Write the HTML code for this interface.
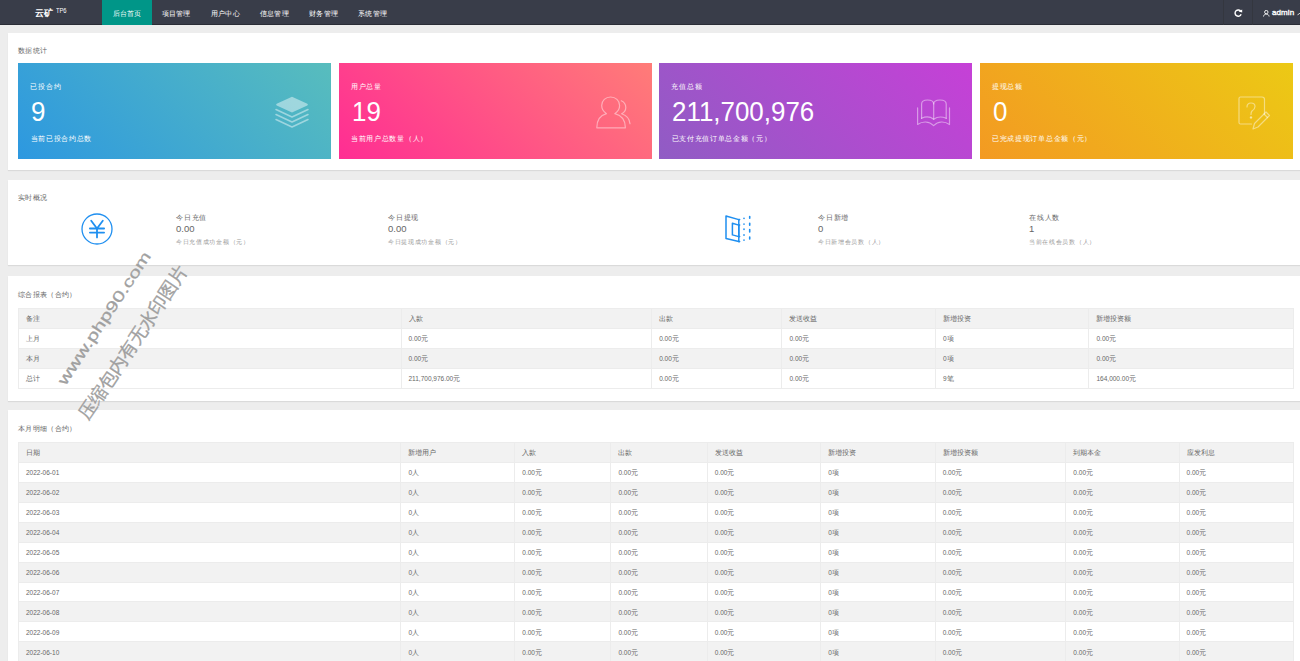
<!DOCTYPE html>
<html><head><meta charset="utf-8"><style>
*{margin:0;padding:0;box-sizing:border-box}
html,body{width:1300px;height:661px;overflow:hidden;background:#ededed;font-family:"Liberation Sans",sans-serif;}
.a{position:absolute;white-space:nowrap;line-height:1}
#nav{position:absolute;left:0;top:0;width:1300px;height:25px;background:#393d49;border-bottom:1px solid #2a2d36}
#nav .it{position:absolute;top:0;height:25px;line-height:27.6px;font-size:7.3px;letter-spacing:0.25px;text-indent:0.25px;color:#fff;text-align:center}
#nav .on{background:#009688}
.panel{position:absolute;left:8px;width:1300px;background:#fff;box-shadow:0 1px 1px rgba(0,0,0,.08)}
.ptitle{position:absolute;left:10px;font-size:7.3px;letter-spacing:0.35px;color:#666;line-height:1}
.card{position:absolute;top:30px;height:96px;color:#fff}
.card .l1{position:absolute;left:12.3px;top:20.5px;font-size:7.1px;letter-spacing:0.75px;line-height:1}
.card .num{position:absolute;left:13px;top:35.5px;font-size:27px;transform:scaleX(0.96);transform-origin:0 0;line-height:1}
.card .l2{position:absolute;left:12.5px;top:71.7px;font-size:7.3px;letter-spacing:0.7px;line-height:1}
.card svg{position:absolute}
table{position:absolute;border-collapse:collapse;table-layout:fixed;font-size:6.5px;color:#666}
td,th{height:19.93px;padding:2px 0 0 7px;text-align:left;font-weight:normal;border:1px solid #ececec;white-space:nowrap;line-height:1}
tr:nth-child(even) td{background:#f2f2f2}
thead th{background:#f2f2f2}
.st .t{font-size:7.2px;letter-spacing:0.8px;color:#666}
.st .v{font-size:9.5px;color:#666}
.st .d{font-size:6.2px;letter-spacing:0.7px;color:#999}
.wm{position:absolute;color:rgba(120,120,120,.55);transform-origin:0 0;white-space:nowrap;line-height:1}
</style></head><body>
<div id="nav"><div class="a" style="left:35px;top:8.7px;font-size:9px;color:#fff;font-weight:bold">云矿</div><div class="a" style="left:55.6px;top:6.6px;font-size:7.4px;color:#fff;transform:scaleX(0.78);transform-origin:0 0">TP6</div><div class="it on" style="left:102.0px;width:50px">后台首页</div><div class="it" style="left:151.1px;width:50px">项目管理</div><div class="it" style="left:200.2px;width:50px">用户中心</div><div class="it" style="left:249.3px;width:50px">信息管理</div><div class="it" style="left:298.4px;width:50px">财务管理</div><div class="it" style="left:347.5px;width:50px">系统管理</div><div style="position:absolute;left:1223px;top:0;width:1px;height:25px;background:#34373f"></div><div style="position:absolute;left:1252px;top:0;width:1px;height:25px;background:#34373f"></div><svg style="position:absolute;left:1233.5px;top:8.8px" width="9" height="8" viewBox="0 0 9 8"><path d="M6.9 2.6A3.1 3.1 0 1 0 7.1 5.2" fill="none" stroke="#fff" stroke-width="1.4"/><path d="M4.6 2.4L8.2 0.4L8.2 3.6Z" fill="#fff"/></svg><svg style="position:absolute;left:1263px;top:10px" width="7" height="7" viewBox="0 0 7 7"><circle cx="3.3" cy="2.1" r="1.7" fill="none" stroke="#fff" stroke-width="0.9"/><path d="M0.5 6.5C0.8 4.8 1.9 4.1 3.3 4.1S5.8 4.8 6.1 6.5" fill="none" stroke="#fff" stroke-width="0.9"/></svg><div class="a" style="left:1272px;top:9.2px;font-size:8px;letter-spacing:0.1px;color:#fff;-webkit-text-stroke:0.35px #fff">admin</div><svg style="position:absolute;left:1297px;top:11.5px" width="5" height="4" viewBox="0 0 5 4"><path d="M0.5 3.2L2.5 1.2L4.5 3.2" fill="none" stroke="#fff" stroke-width="0.9"/></svg></div>
<div class="panel" style="top:33px;height:137px"><div class="ptitle" style="top:13.5px">数据统计</div><div class="card" style="left:10px;width:313px;background:linear-gradient(45deg,#2d98e0,#58bdbd)"><div class="l1">已投合约</div><div class="num">9</div><div class="l2">当前已投合约总数</div><svg style="left:257px;top:33px" width="34" height="32" viewBox="0 0 34 32"><g fill="none" stroke="rgba(255,255,255,.45)" stroke-width="1.6" stroke-linecap="round" stroke-linejoin="round"><path d="M1 13.5L17 21L33 13.5"/><path d="M1 18.5L17 26L33 18.5"/><path d="M1 23.5L17 31L33 23.5"/></g><path d="M17 0.8L32.3 7.8Q33.6 8.6 32.3 9.4L17 16.6L1.7 9.4Q0.4 8.6 1.7 7.8Z" fill="rgba(255,255,255,.45)"/></svg></div><div class="card" style="left:330.5px;width:313px;background:linear-gradient(45deg,#ff2d93,#ff7c78)"><div class="l1">用户总量</div><div class="num">19</div><div class="l2">当前用户总数量（人）</div><svg style="left:257px;top:33px" width="36" height="33" viewBox="0 0 36 33"><g fill="none" stroke="rgba(255,255,255,.45)" stroke-width="1.2" stroke-linecap="round" stroke-linejoin="round"><path d="M10.5 17.7C7.5 15.8 5.7 12.8 5.7 9.6C5.7 4.6 9.6 1 14.6 1S23.6 4.6 23.6 9.6C23.6 12.8 21.8 15.8 18.8 17.7C25 19.3 29.4 24 29.4 31.8H0.8C0.8 24 4.5 19.3 10.5 17.7Z"/><path d="M25.3 4.8C28 6 29.8 8.6 29.8 11.5C29.8 14.2 28.2 16.5 25.6 17.7C30.5 19.3 33.6 23 34 27.7"/></g></svg></div><div class="card" style="left:651px;width:313px;background:linear-gradient(45deg,#905cc4,#c640d7)"><div class="l1">充值总额</div><div class="num">211,700,976</div><div class="l2">已支付充值订单总金额（元）</div><svg style="left:258px;top:36px" width="34" height="28" viewBox="0 0 34 28"><g fill="none" stroke="rgba(255,255,255,.45)" stroke-width="1.2" stroke-linecap="round" stroke-linejoin="round"><path d="M4.6 19.3V5C4.6 2.5 6.5 1 10.5 1C14.5 1 16.7 2.5 16.7 5V20.2"/><path d="M16.7 5C16.7 2.5 19 1 23 1C27 1 29.2 2.5 29.2 5V19.3"/><path d="M4.6 19.3C8.5 17.5 13.5 17.8 16.7 20.3C20 17.8 25 17.5 29.2 19.3"/><path d="M0.6 8.9V25.5C5.5 22 12 22 16.6 26.6C21.2 22 27.5 22 32.5 25.5V8.9"/></g></svg></div><div class="card" style="left:971.5px;width:313px;background:linear-gradient(45deg,#f39a22,#ecc915)"><div class="l1">提现总额</div><div class="num">0</div><div class="l2">已完成提现订单总金额（元）</div><svg style="left:258px;top:32.5px" width="34" height="34" viewBox="0 0 34 34"><g fill="none" stroke="rgba(255,255,255,.45)" stroke-width="1.2" stroke-linecap="round" stroke-linejoin="round"><path d="M13.5 28H2.5Q1 28 1 26.5V2.5Q1 1 2.5 1H24Q26.5 1 26.5 3.5V18"/><path d="M9 11Q9 7 13 7Q17 7 17 10.5Q17 13 14 15Q13 16 13 18.5"/><circle cx="13" cy="21.5" r="0.7" fill="rgba(255,255,255,.45)"/><path d="M15 33L16.5 27.5L28 16L31.5 19.5L20 31Z"/><path d="M26 18L29.5 21.5"/></g></svg></div></div>
<div class="panel" style="top:179.7px;height:85.6px"><div class="ptitle" style="top:14px">实时概况</div><svg style="position:absolute;left:72.7px;top:33.2px" width="32" height="32" viewBox="0 0 32 32"><circle cx="16" cy="16" r="15" fill="none" stroke="#1f8ff0" stroke-width="1.3"/><g fill="none" stroke="#1f8ff0" stroke-width="1.8" stroke-linecap="round"><path d="M10.2 7.8L16 15.5L21.8 7.8"/><path d="M16 15.5V24.4"/><path d="M8.9 15.5H23.1"/><path d="M8.9 19.6H23.1"/></g></svg><svg style="position:absolute;left:717px;top:35px" width="27" height="28" viewBox="0 0 27 28"><g fill="none" stroke="#1f8ff0" stroke-width="1.5" stroke-linejoin="round"><path d="M1 1L13.8 4.6V26.6L1 23.6Z"/><path d="M7.4 8.3L13.8 10.1V21.6L7.4 19.9Z"/></g><g stroke="#1f8ff0" stroke-width="1.6" stroke-linecap="round"><path d="M19 3.3v0.2M19 9v0.3M19 14.1v0.3M19 19.9v0.3M19 25.1v0.2"/><path d="M24.7 1.5v1.8M24.7 8.2v2M24.7 14.6v2.4M24.7 22v2"/><path d="M13.8 4.6h0.8M13.8 10.1h0.8M13.8 21.6h0.8M13.8 26.6h0.8"/></g></svg><div class="st"><div class="a t" style="left:168px;top:34px">今日充值</div><div class="a v" style="left:168px;top:44.2px">0.00</div><div class="a d" style="left:168px;top:59px">今日充值成功金额（元）</div></div><div class="st"><div class="a t" style="left:380px;top:34px">今日提现</div><div class="a v" style="left:380px;top:44.2px">0.00</div><div class="a d" style="left:380px;top:59px">今日提现成功金额（元）</div></div><div class="st"><div class="a t" style="left:810px;top:34px">今日新增</div><div class="a v" style="left:810px;top:44.2px">0</div><div class="a d" style="left:810px;top:59px">今日新增会员数（人）</div></div><div class="st"><div class="a t" style="left:1021px;top:34px">在线人数</div><div class="a v" style="left:1021px;top:44.2px">1</div><div class="a d" style="left:1021px;top:59px">当前在线会员数（人）</div></div></div>
<div class="panel" style="top:275.6px;height:125.7px"><div class="ptitle" style="top:15.5px">综合报表（合约）</div><table style="left:10px;top:32.7px;width:1275px"><colgroup><col style="width:382.5px"><col style="width:250.70000000000005px"><col style="width:130.29999999999995px"><col style="width:153.5px"><col style="width:153.5px"><col style="width:204.5px"></colgroup><thead><tr><th>备注</th><th>入款</th><th>出款</th><th>发送收益</th><th>新增投资</th><th>新增投资额</th></tr></thead><tbody><tr><td>上月</td><td>0.00元</td><td>0.00元</td><td>0.00元</td><td>0项</td><td>0.00元</td></tr><tr><td>本月</td><td>0.00元</td><td>0.00元</td><td>0.00元</td><td>0项</td><td>0.00元</td></tr><tr><td>总计</td><td>211,700,976.00元</td><td>0.00元</td><td>0.00元</td><td>9笔</td><td>164,000.00元</td></tr></tbody></table></div>
<div class="panel" style="top:409.7px;height:400px"><div class="ptitle" style="top:15.5px">本月明细（合约）</div><table style="left:10px;top:32.4px;width:1275px"><colgroup><col style="width:382.4px"><col style="width:113.89999999999998px"><col style="width:96.10000000000002px"><col style="width:96.39999999999998px"><col style="width:113.60000000000002px"><col style="width:114.30000000000007px"><col style="width:130.70000000000005px"><col style="width:113.19999999999982px"><col style="width:114.40000000000009px"></colgroup><thead><tr><th>日期</th><th>新增用户</th><th>入款</th><th>出款</th><th>发送收益</th><th>新增投资</th><th>新增投资额</th><th>到期本金</th><th>应发利息</th></tr></thead><tbody><tr><td>2022-06-01</td><td>0人</td><td>0.00元</td><td>0.00元</td><td>0.00元</td><td>0项</td><td>0.00元</td><td>0.00元</td><td>0.00元</td></tr><tr><td>2022-06-02</td><td>0人</td><td>0.00元</td><td>0.00元</td><td>0.00元</td><td>0项</td><td>0.00元</td><td>0.00元</td><td>0.00元</td></tr><tr><td>2022-06-03</td><td>0人</td><td>0.00元</td><td>0.00元</td><td>0.00元</td><td>0项</td><td>0.00元</td><td>0.00元</td><td>0.00元</td></tr><tr><td>2022-06-04</td><td>0人</td><td>0.00元</td><td>0.00元</td><td>0.00元</td><td>0项</td><td>0.00元</td><td>0.00元</td><td>0.00元</td></tr><tr><td>2022-06-05</td><td>0人</td><td>0.00元</td><td>0.00元</td><td>0.00元</td><td>0项</td><td>0.00元</td><td>0.00元</td><td>0.00元</td></tr><tr><td>2022-06-06</td><td>0人</td><td>0.00元</td><td>0.00元</td><td>0.00元</td><td>0项</td><td>0.00元</td><td>0.00元</td><td>0.00元</td></tr><tr><td>2022-06-07</td><td>0人</td><td>0.00元</td><td>0.00元</td><td>0.00元</td><td>0项</td><td>0.00元</td><td>0.00元</td><td>0.00元</td></tr><tr><td>2022-06-08</td><td>0人</td><td>0.00元</td><td>0.00元</td><td>0.00元</td><td>0项</td><td>0.00元</td><td>0.00元</td><td>0.00元</td></tr><tr><td>2022-06-09</td><td>0人</td><td>0.00元</td><td>0.00元</td><td>0.00元</td><td>0项</td><td>0.00元</td><td>0.00元</td><td>0.00元</td></tr><tr><td>2022-06-10</td><td>0人</td><td>0.00元</td><td>0.00元</td><td>0.00元</td><td>0项</td><td>0.00元</td><td>0.00元</td><td>0.00元</td></tr><tr><td>2022-06-11</td><td>0人</td><td>0.00元</td><td>0.00元</td><td>0.00元</td><td>0项</td><td>0.00元</td><td>0.00元</td><td>0.00元</td></tr></tbody></table></div>
<svg width="1300" height="661" style="position:absolute;left:0;top:0;pointer-events:none"><text x="0" y="0" transform="translate(65.5 386.2) rotate(-56.5) scale(1.4 1)" font-family="Liberation Sans" font-size="15.2" fill="#a0a0a0" stroke="#a0a0a0" stroke-width="0.25">www.php90.com</text><text x="0" y="0" transform="translate(87.5 421) rotate(-56.2)" font-family="Liberation Sans" font-size="18.2" fill="#a0a0a0" stroke="#a0a0a0" stroke-width="0.3">压缩包内有无水印图片</text></svg>
</body></html>
